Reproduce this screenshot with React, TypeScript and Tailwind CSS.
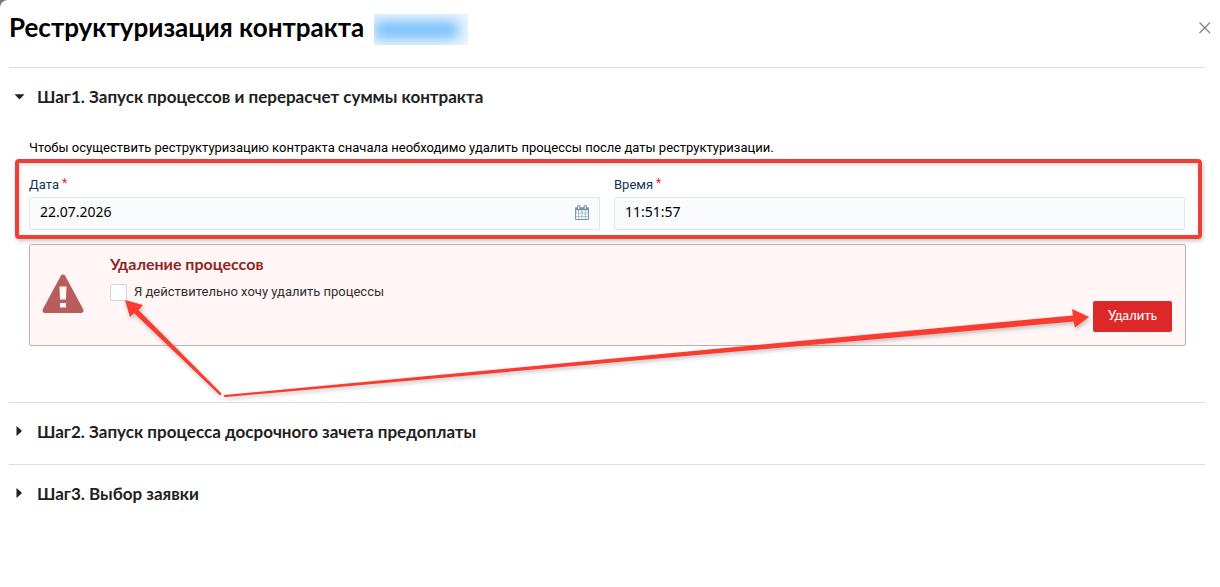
import React, { useState } from "react";
import type { ReactNode } from "react";

function CalendarIcon() {
  return (
    <svg viewBox="0 0 1664 1792" className="mb-[2px] h-[15px] w-[14px] fill-[#7b91a8]" aria-hidden="true">
      <path d="M128 1664h288v-288h-288v288zM480 1664h320v-288h-320v288zM128 1312h288v-320h-288v320zM480 1312h320v-320h-320v320zM128 928h288v-288h-288v288zM864 1664h320v-288h-320v288zM480 928h320v-288h-320v288zM1248 1664h288v-288h-288v288zM864 1312h320v-320h-320v320zM512 448v-288q0-13-9.5-22.5t-22.5-9.5h-64q-13 0-22.5 9.5t-9.5 22.5v288q0 13 9.5 22.5t22.5 9.5h64q13 0 22.5-9.5t9.5-22.5zM1248 1312h288v-320h-288v320zM864 928h320v-288h-320v288zM1248 928h288v-288h-288v288zM1280 448v-288q0-13-9.5-22.5t-22.5-9.5h-64q-13 0-22.5 9.5t-9.5 22.5v288q0 13 9.5 22.5t22.5 9.5h64q13 0 22.5-9.5t9.5-22.5zM1664 384v1280q0 52-38 90t-90 38h-1408q-52 0-90-38t-38-90v-1280q0-52 38-90t90-38h128v-96q0-66 47-113t113-47h64q66 0 113 47t47 113v96h384v-96q0-66 47-113t113-47h64q66 0 113 47t47 113v96h128q52 0 90 38t38 90z" />
    </svg>
  );
}

function WarningIcon() {
  return (
    <svg viewBox="0 0 42 40" className="h-10 w-[42px] shrink-0" aria-hidden="true">
      <path d="M21 3 L39 36.500 H3 Z" fill="#b75d5d" stroke="#b75d5d" strokeWidth="5" strokeLinejoin="round" />
      <path d="M17.500 12.500h7l-.5 13h-6zM18 29h6v4.500h-6z" fill="#fff6f5" />
    </svg>
  );
}

function StepHeader({ title, open, onToggle }: { title: string; open: boolean; onToggle: () => void }) {
  return (
    <h2>
      <button
        type="button"
        aria-expanded={open}
        onClick={onToggle}
        className="flex w-full items-center gap-3 pt-[17px] pb-5 pl-1 text-left text-[17px] leading-6 font-bold text-[#212121]"
      >
        <svg viewBox="0 0 12 12" className="size-3 shrink-0 fill-current" aria-hidden="true">
          {open ? <path d="M1.500 3.200h10L7.200 7.800q-.7.700-1.400 0z" /> : <path d="M3.500 0v10l4.800-4.300q.7-.7 0-1.400z" />}
        </svg>
        {title}
      </button>
    </h2>
  );
}

function Field({ id, label, value, icon }: { id: string; label: string; value: string; icon?: ReactNode }) {
  return (
    <div className="min-w-0 flex-1">
      <label htmlFor={id} className="flex gap-[3px] text-[13px] leading-5 text-[#17344f]">
        {label} <span className="text-[12px] leading-4 text-[#dc2828]">*</span>
      </label>
      <div className="mt-[2px] flex h-[33px] items-center rounded-xs border border-[#e0e7ec] bg-[#f9fbfc] px-[10px]">
        <input id={id} defaultValue={value} className="min-w-0 flex-1 bg-transparent pb-1 font-['Noto_Sans',sans-serif] text-[14px] leading-5 text-black outline-none" />
        {icon}
      </div>
    </div>
  );
}

function PointerArrows() {
  return (
    <svg
      viewBox="0 0 1220 120"
      preserveAspectRatio="none"
      className="pointer-events-none absolute top-[228px] left-0 h-[120px] w-full fill-[#fb3b30] drop-shadow-[1px_2px_2px_rgba(90,90,90,0.4)]"
      aria-hidden="true"
    >
      <path d="M125 5 L143 10 L138.500 15 L221 98 Q222 101 219 99.500 L134 18 L130 22 Z" />
      <path d="M224 100 L1073 20.500 L1072 14 L1089 22 L1075 32.500 L1073.500 26.500 L226 102 Q223 102 224 100 Z" />
    </svg>
  );
}

export default function App() {
  const [openSteps, setOpenSteps] = useState<number[]>([1]);
  const toggle = (step: number) =>
    setOpenSteps((steps) => (steps.includes(step) ? steps.filter((s) => s !== step) : [...steps, step]));

  return (
    <div className="min-h-screen bg-[#777777]">
      <main role="dialog" aria-labelledby="dialog-title" className="min-h-screen rounded-tl-lg bg-white font-['Lato',sans-serif]">
        <header className="flex h-[67px] items-start pt-[11px] pr-2 pl-[9px]">
          <h1 id="dialog-title" className="pr-[10px] text-[26px] leading-8 font-bold text-black">
            Реструктуризация контракта
          </h1>
          <span className="mt-[3px] flex h-[31px] w-[94px] items-center overflow-hidden bg-[#eaf5fe]" aria-hidden="true">
            <span className="h-4 w-[86px] rounded-r-full bg-[#69b8f7] blur-[7px]" />
          </span>
          <button type="button" aria-label="Закрыть" className="mt-[10px] ml-auto">
            <svg viewBox="0 0 14 14" className="size-[14px] stroke-[#858585]" fill="none" aria-hidden="true">
              <path d="M1.500 1.500 12 12M12 1.500 1.500 12" strokeWidth="1.300" />
            </svg>
          </button>
        </header>

        <section className="relative">
          <hr className="mr-[15px] ml-[9px] border-[#dcdddd]" />
          <div className="px-[9px]">
            <StepHeader title="Шаг1. Запуск процессов и перерасчет суммы контракта" open={openSteps.includes(1)} onToggle={() => toggle(1)} />
          </div>
          {openSteps.includes(1) && (
            <div className="pt-[9px] pb-14 font-['Roboto',sans-serif]">
              <p className="px-[29px] text-[13px] leading-5 text-black">
                Чтобы осуществить реструктуризацию контракта сначала необходимо удалить процессы после даты реструктуризации.
              </p>
              <div className="mt-px mr-[18px] ml-[15px] flex gap-[14px] rounded border-4 border-[#eb4038] pt-3 pr-[13px] pb-[5px] pl-[10px] shadow-[1px_2px_4px_rgba(90,90,90,0.35),inset_1px_2px_4px_rgba(90,90,90,0.2)]">
                <Field id="date" label="Дата" value="22.07.2026" icon={<CalendarIcon />} />
                <Field id="time" label="Время" value="11:51:57" />
              </div>
              <div className="mt-[5px] mr-[34px] ml-[29px] flex h-[102px] gap-6 rounded-xs border border-[#cfacac] bg-[#fff6f5] pr-[13px] pl-3">
                <div className="flex items-center pb-[2px]">
                  <WarningIcon />
                </div>
                <div className="flex-1 pt-[7px] pl-[2px]">
                  <h3 className="font-['Lato',sans-serif] text-[16px] leading-6 font-bold text-[#8d2727]">Удаление процессов</h3>
                  <label className="mt-[6px] flex items-center gap-[7px] text-[13px] leading-5 text-[#303030]">
                    <input type="checkbox" className="size-[17px] appearance-none rounded-xs border border-[#d0d4d8] bg-white checked:bg-[#dc2828]" />
                    Я действительно хочу удалить процессы
                  </label>
                </div>
                <button type="button" className="mb-[13px] h-[31px] self-end rounded-xs bg-[#dc2828] px-[15px] pb-[3px] font-['Lato',sans-serif] text-[13px] leading-5 font-medium text-white">
                  Удалить
                </button>
              </div>
            </div>
          )}
          {openSteps.includes(1) && <PointerArrows />}
        </section>

        <section className="mr-[15px] ml-[9px] border-t border-[#dcdddd]">
          <StepHeader title="Шаг2. Запуск процесса досрочного зачета предоплаты" open={openSteps.includes(2)} onToggle={() => toggle(2)} />
        </section>
        <section className="mr-[15px] ml-[9px] border-t border-[#dcdddd]">
          <StepHeader title="Шаг3. Выбор заявки" open={openSteps.includes(3)} onToggle={() => toggle(3)} />
        </section>
      </main>
    </div>
  );
}
